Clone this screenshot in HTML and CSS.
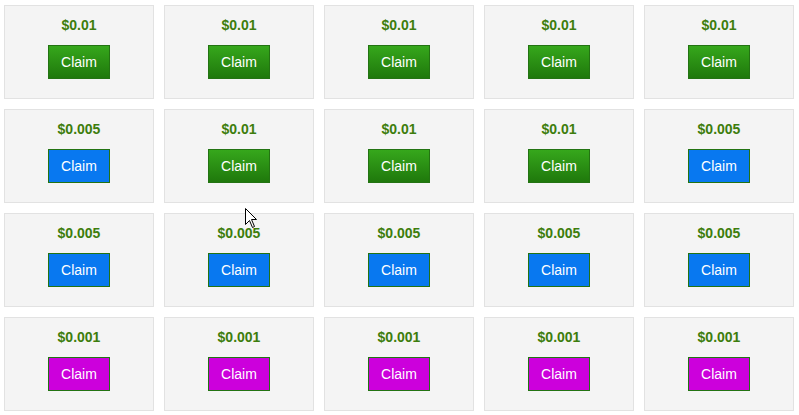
FILE: index.html
```html
<!DOCTYPE html>
<html lang="en">
<head>
  <meta charset="UTF-8">
  <title>Claim</title>
  <link rel="stylesheet" href="styles.css">
</head>
<body>
  <div class="grid">
    <div class="card"><div class="amount">$0.01</div><button class="claim green">Claim</button></div>
    <div class="card"><div class="amount">$0.01</div><button class="claim green">Claim</button></div>
    <div class="card"><div class="amount">$0.01</div><button class="claim green">Claim</button></div>
    <div class="card"><div class="amount">$0.01</div><button class="claim green">Claim</button></div>
    <div class="card"><div class="amount">$0.01</div><button class="claim green">Claim</button></div>

    <div class="card"><div class="amount">$0.005</div><button class="claim blue">Claim</button></div>
    <div class="card"><div class="amount">$0.01</div><button class="claim green">Claim</button></div>
    <div class="card"><div class="amount">$0.01</div><button class="claim green">Claim</button></div>
    <div class="card"><div class="amount">$0.01</div><button class="claim green">Claim</button></div>
    <div class="card"><div class="amount">$0.005</div><button class="claim blue">Claim</button></div>

    <div class="card"><div class="amount">$0.005</div><button class="claim blue">Claim</button></div>
    <div class="card"><div class="amount">$0.005</div><button class="claim blue">Claim</button></div>
    <div class="card"><div class="amount">$0.005</div><button class="claim blue">Claim</button></div>
    <div class="card"><div class="amount">$0.005</div><button class="claim blue">Claim</button></div>
    <div class="card"><div class="amount">$0.005</div><button class="claim blue">Claim</button></div>

    <div class="card"><div class="amount">$0.001</div><button class="claim purple">Claim</button></div>
    <div class="card"><div class="amount">$0.001</div><button class="claim purple">Claim</button></div>
    <div class="card"><div class="amount">$0.001</div><button class="claim purple">Claim</button></div>
    <div class="card"><div class="amount">$0.001</div><button class="claim purple">Claim</button></div>
    <div class="card"><div class="amount">$0.001</div><button class="claim purple">Claim</button></div>
  </div>

  <svg class="cursor" width="13" height="21" viewBox="0 0 13 21">
    <path d="M0.5 0.5 L0.5 16.5 L4.5 12.5 L7.5 19.5 L9.5 18.5 L6.5 11.5 L11.5 11.5 Z" fill="#fff" stroke="#000" stroke-width="1"/>
  </svg>
</body>
</html>
```

FILE: styles.css
```css
body {
  margin: 0;
  background-color: #ffffff;
  font-family: "Liberation Sans", Arial, sans-serif;
}
.grid {
  display: grid;
  grid-template-columns: repeat(5, 150px);
  grid-auto-rows: 94px;
  gap: 10px;
  padding: 5px 4px;
}
.card {
  box-sizing: border-box;
  background-color: #f4f4f4;
  border: 1px solid #e2e2e2;
  display: flex;
  flex-direction: column;
  align-items: center;
  padding-top: 11px;
}
.amount {
  font-size: 14px;
  font-weight: bold;
  line-height: 16px;
  color: #3d7d0c;
}
.claim {
  margin-top: 12px;
  width: 62px;
  height: 34px;
  box-sizing: border-box;
  padding: 0;
  font-family: "Liberation Sans", Arial, sans-serif;
  font-size: 14px;
  color: #ffffff;
  border: 1px solid #237312;
  cursor: pointer;
}
.green {
  background: linear-gradient(#36a71c, #1f780c);
}
.blue {
  background-color: #0878f0;
}
.purple {
  background-color: #cc00dc;
}
.cursor {
  position: absolute;
  left: 245px;
  top: 208px;
}
```
